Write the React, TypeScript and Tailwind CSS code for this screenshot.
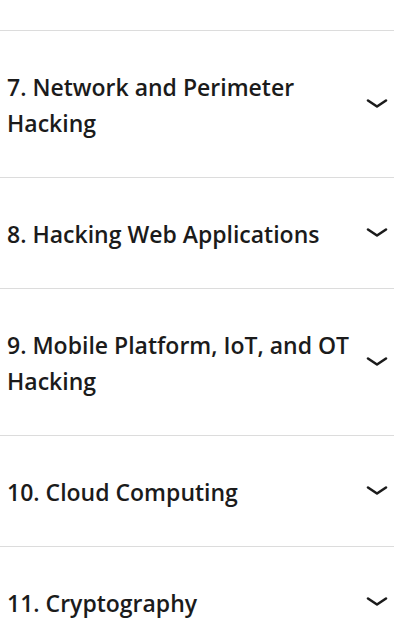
const modules = [
  "7. Network and Perimeter Hacking",
  "8. Hacking Web Applications",
  "9. Mobile Platform, IoT, and OT Hacking",
  "10. Cloud Computing",
  "11. Cryptography",
];

function Chevron() {
  return (
    <svg width="22" height="12" viewBox="0 0 22 12" fill="none" className="shrink-0">
      <path d="M2 2.5 L11 8.5 L20 2.5" stroke="#1b1b1b" strokeWidth="2.6" strokeLinecap="round" strokeLinejoin="round" />
    </svg>
  );
}

export default function App() {
  return (
    <div className="w-[394px] h-[624px] overflow-hidden bg-white" style={{ fontFamily: '"Open Sans", "Noto Sans", sans-serif' }}>
      <div className="h-[30px]" />
      {modules.map((title) => (
        <div key={title} className="border-t border-[#dcdcdc] pl-[7px] pr-[6px] py-[37px] flex items-center justify-between gap-3">
          <span className="text-[23px] leading-[36px] font-semibold text-[#1b1b1b] pt-[1px] -mb-[1px]">{title}</span>
          <Chevron />
        </div>
      ))}
    </div>
  );
}
